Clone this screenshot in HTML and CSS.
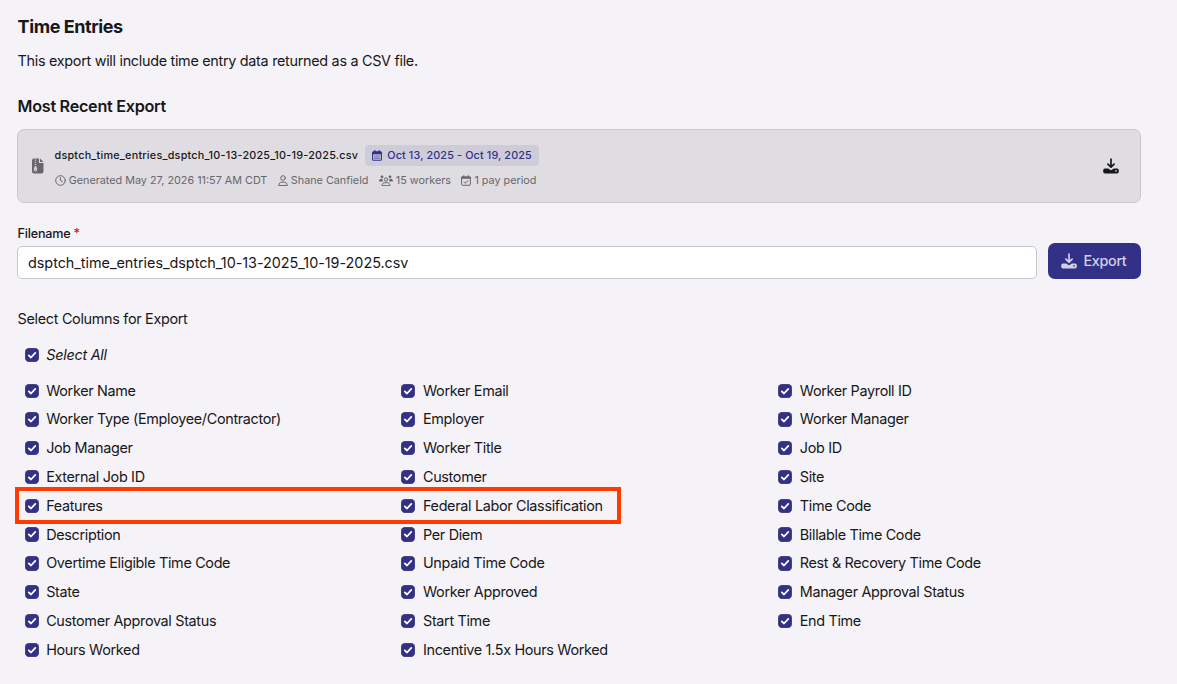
FILE: index.html
```html
<!DOCTYPE html>
<html lang="en">
<head>
<meta charset="utf-8">
<title>Time Entries</title>
<link rel="stylesheet" href="styles.css">
</head>
<body>
<svg class="sprite" aria-hidden="true">
  <symbol id="download" viewBox="0 0 16 16">
    <path d="M8 1.2v7.6M4.9 6.1 8 9.2l3.1-3.1" fill="none" stroke="currentColor" stroke-width="1.7" stroke-linecap="round" stroke-linejoin="round"/>
    <path fill-rule="evenodd" d="M2.2 10.4h3l1.5 1.2a2 2 0 0 0 2.6 0l1.5-1.2h3a1.9 1.9 0 0 1 2 2v1a1.9 1.9 0 0 1-2 2H2.2a1.9 1.9 0 0 1-2-2v-1a1.9 1.9 0 0 1 2-2zM13 12.1a.8.8 0 1 0 0 1.6.8.8 0 0 0 0-1.6z" fill="currentColor"/>
  </symbol>
  <symbol id="check" viewBox="0 0 14 14">
    <path d="m3.8 7.2 2.2 2.1 4.3-4.6" fill="none" stroke="#fff" stroke-width="1.8" stroke-linecap="round" stroke-linejoin="round"/>
  </symbol>
</svg>
<main class="page">
  <h1 class="title">Time Entries</h1>
  <p class="intro">This export will include time entry data returned as a CSV file.</p>
  <h2 class="subtitle">Most Recent Export</h2>

  <section class="card">
    <svg class="file-icon" viewBox="0 0 12 16">
      <path d="M2 .5h5V5h4.5v8.5a2 2 0 0 1-2 2H2a2 2 0 0 1-2-2v-11a2 2 0 0 1 2-2zM8 .5 11.5 4H8z" fill="#68666c"/>
      <path d="M2.7 2h1.6M2.7 4.3h1.6M2.7 6.6h1.6" stroke="#dfdde1" stroke-width=".9"/>
      <path d="M2.7 8.2h1.6l.8 3.1a1.7 1.7 0 1 1-3.2 0z" fill="#dfdde1"/>
      <path d="M2.8 12h1.4" stroke="#68666c" stroke-width="1"/>
    </svg>
    <div class="card-body">
      <div class="card-top">
        <span class="file-name">dsptch_time_entries_dsptch_10-13-2025_10-19-2025.csv</span>
        <span class="period">
          <svg class="period-icon" viewBox="0 0 10 11"><path d="M2.8.5v2M7.2.5v2" stroke="currentColor" stroke-width="1.2" stroke-linecap="round"/><rect x=".6" y="1.8" width="8.8" height="8.4" rx="1" fill="none" stroke="currentColor" stroke-width="1.1"/><path d="M.5 1.8h9v2.5h-9z" fill="currentColor"/><path d="M2.3 6h5.4M2.3 8.1h5.4" stroke="currentColor" stroke-width="1.1" stroke-dasharray="1.3 .7"/></svg>
          <span class="period-text">Oct 13, 2025 - Oct 19, 2025</span>
        </span>
      </div>
      <div class="meta">
        <span class="meta-item"><svg class="clock" viewBox="0 0 11 11"><circle cx="5.5" cy="5.5" r="4.8"/><path d="M5.4 2.6v3l2 1.2"/></svg>Generated May 27, 2026 11:57 AM CDT</span>
        <span class="meta-item"><svg class="user" viewBox="0 0 10 11"><circle cx="5" cy="3" r="2.3"/><path d="M.7 10.2c.2-2 1.5-3.1 3.3-3.1h2c1.8 0 3.1 1.1 3.3 3.1z"/></svg>Shane Canfield</span>
        <span class="meta-item"><svg class="users" viewBox="0 0 14 11"><g class="solid"><circle cx="3" cy="1.8" r="1.4"/><circle cx="11" cy="1.8" r="1.4"/><path d="M0 6.2c0-1.5 1-2.4 2.3-2.4h1.3c-.5 1 0 2 .6 2.6H.2zM14 6.2c0-1.5-1-2.4-2.3-2.4h-1.3c.5 1 0 2-.6 2.6h4z"/></g><circle cx="7" cy="4.5" r="1.7"/><path d="M3 10.3c.2-1.8 1.3-2.6 2.7-2.6h2.6c1.4 0 2.5.8 2.7 2.6z"/></svg>15 workers</span>
        <span class="meta-item"><svg class="cal" viewBox="0 0 10 11"><path d="M2.8.6v1.6M7.2.6v1.6"/><rect x=".6" y="1.9" width="8.8" height="8.4" rx="1"/><path d="M.6 2.8h8.8" stroke-width="1.9"/><path d="m3.1 6.9 1.4 1.3 2.4-2.5"/></svg>1 pay period</span>
      </div>
    </div>
    <svg class="card-download"><use href="#download"/></svg>
  </section>

  <div class="file-row">
    <div class="field">
      <label class="label" for="filename">Filename <span class="required">*</span></label>
      <input class="input" id="filename" type="text" value="dsptch_time_entries_dsptch_10-13-2025_10-19-2025.csv">
    </div>
    <button class="export"><svg class="export-icon"><use href="#download"/></svg>Export</button>
  </div>

  <p class="columns-title">Select Columns for Export</p>
  <div class="option all"><svg class="box"><use href="#check"/></svg>Select All</div>
  <div class="options">
    <div class="option"><svg class="box"><use href="#check"/></svg>Worker Name</div>
    <div class="option"><svg class="box"><use href="#check"/></svg>Worker Email</div>
    <div class="option"><svg class="box"><use href="#check"/></svg>Worker Payroll ID</div>
    <div class="option"><svg class="box"><use href="#check"/></svg>Worker Type (Employee/Contractor)</div>
    <div class="option"><svg class="box"><use href="#check"/></svg>Employer</div>
    <div class="option"><svg class="box"><use href="#check"/></svg>Worker Manager</div>
    <div class="option"><svg class="box"><use href="#check"/></svg>Job Manager</div>
    <div class="option"><svg class="box"><use href="#check"/></svg>Worker Title</div>
    <div class="option"><svg class="box"><use href="#check"/></svg>Job ID</div>
    <div class="option"><svg class="box"><use href="#check"/></svg>External Job ID</div>
    <div class="option"><svg class="box"><use href="#check"/></svg>Customer</div>
    <div class="option"><svg class="box"><use href="#check"/></svg>Site</div>
    <div class="option"><svg class="box"><use href="#check"/></svg>Features</div>
    <div class="option"><svg class="box"><use href="#check"/></svg>Federal Labor Classification</div>
    <div class="option"><svg class="box"><use href="#check"/></svg>Time Code</div>
    <div class="option"><svg class="box"><use href="#check"/></svg>Description</div>
    <div class="option"><svg class="box"><use href="#check"/></svg>Per Diem</div>
    <div class="option"><svg class="box"><use href="#check"/></svg>Billable Time Code</div>
    <div class="option"><svg class="box"><use href="#check"/></svg>Overtime Eligible Time Code</div>
    <div class="option"><svg class="box"><use href="#check"/></svg>Unpaid Time Code</div>
    <div class="option"><svg class="box"><use href="#check"/></svg>Rest &amp; Recovery Time Code</div>
    <div class="option"><svg class="box"><use href="#check"/></svg>State</div>
    <div class="option"><svg class="box"><use href="#check"/></svg>Worker Approved</div>
    <div class="option"><svg class="box"><use href="#check"/></svg>Manager Approval Status</div>
    <div class="option"><svg class="box"><use href="#check"/></svg>Customer Approval Status</div>
    <div class="option"><svg class="box"><use href="#check"/></svg>Start Time</div>
    <div class="option"><svg class="box"><use href="#check"/></svg>End Time</div>
    <div class="option"><svg class="box"><use href="#check"/></svg>Hours Worked</div>
    <div class="option"><svg class="box"><use href="#check"/></svg>Incentive 1.5x Hours Worked</div>
    <div class="highlight"></div>
  </div>
</main>
</body>
</html>
```

FILE: styles.css
```css
* { box-sizing: border-box; }
body {
  margin: 0;
  background: #f5f3f7;
  color: #18171a;
  font: 14.4px/20px Inter, sans-serif;
  letter-spacing: -0.31px;
}
.sprite { display: none; }
.page { height: 684px; padding: 15px 36px 0 17px; overflow: hidden; }
.title, .subtitle, .intro, .columns-title { margin: 0; padding-left: 0.6px; }
.title { font-size: 18px; line-height: 24px; font-weight: 700; letter-spacing: -0.42px; }
.intro { margin-top: 12px; letter-spacing: -0.3px; }
.subtitle { margin-top: 24px; font-size: 16.2px; line-height: 22px; font-weight: 600; letter-spacing: -0.29px; }
.card {
  display: flex;
  align-items: center;
  height: 74px;
  margin-top: 12px;
  padding: 0 21.5px 0 14px;
  border: 1px solid #c9c7cb;
  border-radius: 7px;
  background: #dfdde1;
}
.file-icon { width: 12px; height: 16px; }
.card-body { flex: 1; padding: 3px 0 0 10.5px; }
.card-top { display: flex; align-items: center; gap: 7px; height: 21px; }
.file-name { padding-top: 1px; font-size: 10.8px; font-weight: 500; letter-spacing: 0.235px; white-space: nowrap; }
.period {
  display: flex;
  align-items: center;
  gap: 5px;
  height: 21px;
  padding: 0 7px;
  border-radius: 4px;
  background: #cfccda;
  color: #323087;
  font-size: 10.8px;
  font-weight: 500;
  letter-spacing: 0.14px;
  white-space: nowrap;
}
.period-icon { width: 10px; height: 11px; }
.period-text { padding-top: 1px; }
.meta { display: flex; gap: 10.3px; height: 20px; margin-top: 5px; color: #68666c; font-size: 10.8px; letter-spacing: 0; white-space: nowrap; }
.meta-item { display: flex; align-items: center; gap: 3.2px; }
.meta-item svg { fill: none; stroke: currentColor; stroke-linecap: round; stroke-linejoin: round; }
.meta-item .solid { fill: currentColor; stroke: none; }
.clock { width: 11px; height: 11px; }
.user, .cal { width: 10px; height: 11px; }
.users { width: 14px; height: 11px; }
.card-download { width: 16px; height: 16px; }
.file-row { display: flex; align-items: flex-end; gap: 11px; margin-top: 22px; }
.field { flex: 1; }
.label { display: block; padding-left: 0.6px; font-size: 12.6px; line-height: 18px; font-weight: 500; letter-spacing: -0.22px; }
.required { color: #b91c1c; }
.input {
  display: block;
  width: 100%;
  height: 33px;
  margin-top: 3px;
  padding: 0 10px;
  border: 1px solid #c9c7cb;
  border-radius: 5px;
  background: #fff;
  color: inherit;
  font: inherit;
  letter-spacing: -0.03px;
}
.export {
  display: flex;
  align-items: center;
  gap: 6.5px;
  width: 93px;
  height: 36px;
  padding: 0 13px;
  border: 0;
  border-radius: 7px;
  background: #323087;
  color: #d2d1e8;
  font: 500 14.4px/20px Inter, sans-serif;
  letter-spacing: -0.35px;
}
.export-icon { width: 16px; height: 16px; }
.columns-title { margin-top: 30px; }
.option { display: flex; align-items: center; gap: 7.6px; height: 28.8px; padding-left: 7.6px; letter-spacing: -0.33px; white-space: nowrap; }
.all { margin-top: 11.5px; font-style: italic; letter-spacing: -0.26px; }
.box { width: 14px; height: 14.4px; border-radius: 4.5px; background: #323087; box-shadow: inset 0 0 0 0.5px #55537a; }
.options { position: relative; display: grid; grid-template-columns: repeat(3, 376.8px); margin-top: 7px; }
.highlight {
  position: absolute;
  left: -2px;
  top: 111px;
  width: 606px;
  height: 37px;
  border: 4px solid #ff3b00;
}
```
